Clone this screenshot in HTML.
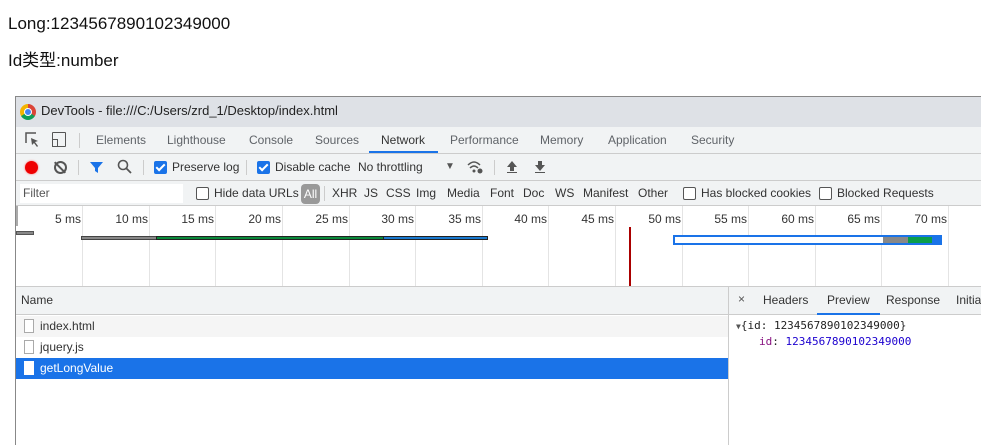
<!DOCTYPE html>
<html><head><meta charset="utf-8"><style>
*{margin:0;padding:0;box-sizing:border-box}
body{width:981px;height:445px;overflow:hidden;background:#fff;font-family:"Liberation Sans","Noto Sans CJK SC",sans-serif;position:relative;color:#222}
.a{position:absolute;white-space:nowrap;line-height:1.15}
.t{font-size:12px;color:#333}
.g{color:#5f6368}
.cb{position:absolute;width:13px;height:13px;border-radius:2px}
.on{background:#1a73e8}
.on:after{content:"";position:absolute;left:4px;top:1px;width:3px;height:7px;border:solid #fff;border-width:0 2px 2px 0;transform:rotate(45deg)}
.off{border:1px solid #555;background:#fff}
.vl{position:absolute;width:1px;background:#ccc}
.grid{position:absolute;top:206px;height:80px;width:1px;background:#e4e4e4}
.ms{position:absolute;top:212px;font-size:12px;color:#333;text-align:right;width:50px}
</style></head><body>
<div class="a" style="left:8px;top:15px;font-size:17px;color:#111;line-height:18px">Long:1234567890102349000</div>
<div class="a" style="left:8px;top:52px;font-size:17px;color:#111;line-height:18px">Id类型:number</div>

<div class="a" style="left:15px;top:96px;width:966px;height:349px;border-left:1px solid #888;border-top:1px solid #888;background:#fff"></div>
<div class="a" style="left:16px;top:97px;width:965px;height:30px;background:#dee1e6"></div>
<div class="a" style="left:20px;top:104px;width:16px;height:16px;border-radius:50%;background:conic-gradient(#db4437 0 120deg,#0f9d58 120deg 240deg,#f4b400 240deg)"></div>
<div class="a" style="left:24px;top:108px;width:8px;height:8px;border-radius:50%;background:#4285f4;border:1px solid #fff"></div>
<div class="a" style="left:41px;top:104px;font-size:13px;color:#222">DevTools - file:///C:/Users/zrd_1/Desktop/index.html</div>
<div class="a" style="left:16px;top:127px;width:965px;height:27px;background:#f1f3f4;border-bottom:1px solid #ccc"></div>
<svg class="a" style="left:25px;top:132px" width="16" height="16"><path d="M1 11V1H11" fill="none" stroke="#555" stroke-width="1.5"/><path d="M6 6L13 9L10 10L13 14L12 15L9 11L7 13Z" fill="#555"/></svg>
<div class="a" style="left:52px;top:132px;width:14px;height:15px;border:1.5px solid #555;border-radius:1px"></div>
<div class="a" style="left:52px;top:139px;width:6px;height:8px;border:1.5px solid #555;background:#f1f3f4"></div>
<div class="vl" style="left:79px;top:133px;height:15px"></div>
<div class="a g" style="left:96px;top:134px;font-size:12px">Elements</div>
<div class="a g" style="left:167px;top:134px;font-size:12px">Lighthouse</div>
<div class="a g" style="left:249px;top:134px;font-size:12px">Console</div>
<div class="a g" style="left:315px;top:134px;font-size:12px">Sources</div>
<div class="a" style="left:381px;top:134px;font-size:12px;color:#333">Network</div>
<div class="a" style="left:369px;top:151px;width:69px;height:2px;background:#1a73e8"></div>
<div class="a g" style="left:450px;top:134px;font-size:12px">Performance</div>
<div class="a g" style="left:540px;top:134px;font-size:12px">Memory</div>
<div class="a g" style="left:608px;top:134px;font-size:12px">Application</div>
<div class="a g" style="left:691px;top:134px;font-size:12px">Security</div>
<div class="a" style="left:16px;top:154px;width:965px;height:27px;background:#f1f3f4;border-bottom:1px solid #ccc"></div>
<div class="a" style="left:25px;top:161px;width:13px;height:13px;border-radius:50%;background:#e00;box-shadow:0 0 2px #f66"></div>
<div class="a" style="left:54px;top:161px;width:13px;height:13px;border-radius:50%;border:2px solid #555"></div>
<div class="a" style="left:59px;top:160px;width:2px;height:15px;background:#555;transform:rotate(-45deg)"></div>
<div class="vl" style="left:78px;top:160px;height:15px"></div>
<svg class="a" style="left:89px;top:160px" width="15" height="15"><path d="M1 2H14L9 8V13L6 11V8Z" fill="#1a73e8"/></svg>
<svg class="a" style="left:117px;top:159px" width="15" height="15"><circle cx="6" cy="6" r="4.5" fill="none" stroke="#555" stroke-width="1.6"/><path d="M9 9L14 14" stroke="#555" stroke-width="1.8"/></svg>
<div class="vl" style="left:143px;top:160px;height:15px"></div>
<div class="cb on" style="left:154px;top:161px"></div>
<div class="a t" style="left:172px;top:161px">Preserve log</div>
<div class="vl" style="left:246px;top:160px;height:15px"></div>
<div class="cb on" style="left:257px;top:161px"></div>
<div class="a t" style="left:275px;top:161px">Disable cache</div>
<div class="a t" style="left:358px;top:161px">No throttling</div>
<div class="a" style="left:445px;top:161px;font-size:10px;color:#555">▼</div>
<svg class="a" style="left:466px;top:159px" width="18" height="16"><path d="M2 6Q8 0 14 6M4 9Q8 5 12 9" fill="none" stroke="#555" stroke-width="1.5"/><circle cx="8" cy="12" r="1.5" fill="#555"/><circle cx="14" cy="12" r="2.5" fill="#555"/></svg>
<div class="vl" style="left:494px;top:160px;height:15px"></div>
<svg class="a" style="left:505px;top:160px" width="14" height="14"><path d="M7 1L12 7H9V11H5V7H2Z M2 12H12V13H2Z" fill="#555"/></svg>
<svg class="a" style="left:533px;top:160px" width="14" height="14"><path d="M5 1H9V5H12L7 11L2 5H5Z M2 12H12V13H2Z" fill="#555"/></svg>
<div class="a" style="left:16px;top:181px;width:965px;height:25px;background:#f1f3f4;border-bottom:1px solid #ccc"></div>
<div class="a" style="left:20px;top:184px;width:163px;height:19px;background:#fff"></div>
<div class="a t" style="left:23px;top:187px;color:#555">Filter</div>
<div class="cb off" style="left:196px;top:187px"></div>
<div class="a t" style="left:214px;top:187px">Hide data URLs</div>
<div class="a" style="left:301px;top:184px;width:19px;height:20px;border-radius:4px;background:#999;color:#fff;font-size:12px;text-align:center;line-height:20px">All</div>
<div class="vl" style="left:324px;top:186px;height:15px"></div>
<div class="a t" style="left:332px;top:187px">XHR</div>
<div class="a t" style="left:364px;top:187px">JS</div>
<div class="a t" style="left:386px;top:187px">CSS</div>
<div class="a t" style="left:416px;top:187px">Img</div>
<div class="a t" style="left:447px;top:187px">Media</div>
<div class="a t" style="left:490px;top:187px">Font</div>
<div class="a t" style="left:523px;top:187px">Doc</div>
<div class="a t" style="left:555px;top:187px">WS</div>
<div class="a t" style="left:583px;top:187px">Manifest</div>
<div class="a t" style="left:638px;top:187px">Other</div>
<div class="cb off" style="left:683px;top:187px"></div>
<div class="a t" style="left:701px;top:187px">Has blocked cookies</div>
<div class="cb off" style="left:819px;top:187px"></div>
<div class="a t" style="left:837px;top:187px">Blocked Requests</div>
<div class="grid" style="left:82px"></div><div class="ms" style="left:31px">5 ms</div>
<div class="grid" style="left:149px"></div><div class="ms" style="left:98px">10 ms</div>
<div class="grid" style="left:215px"></div><div class="ms" style="left:164px">15 ms</div>
<div class="grid" style="left:282px"></div><div class="ms" style="left:231px">20 ms</div>
<div class="grid" style="left:349px"></div><div class="ms" style="left:298px">25 ms</div>
<div class="grid" style="left:415px"></div><div class="ms" style="left:364px">30 ms</div>
<div class="grid" style="left:482px"></div><div class="ms" style="left:431px">35 ms</div>
<div class="grid" style="left:548px"></div><div class="ms" style="left:497px">40 ms</div>
<div class="grid" style="left:615px"></div><div class="ms" style="left:564px">45 ms</div>
<div class="grid" style="left:682px"></div><div class="ms" style="left:631px">50 ms</div>
<div class="grid" style="left:748px"></div><div class="ms" style="left:697px">55 ms</div>
<div class="grid" style="left:815px"></div><div class="ms" style="left:764px">60 ms</div>
<div class="grid" style="left:881px"></div><div class="ms" style="left:830px">65 ms</div>
<div class="grid" style="left:948px"></div><div class="ms" style="left:897px">70 ms</div>
<div class="a" style="left:16px;top:206px;width:2px;height:20px;background:#aaa"></div>
<div class="a" style="left:16px;top:231px;width:18px;height:4px;background:#888;border:1px solid #555"></div>
<div class="a" style="left:81px;top:236px;width:76px;height:4px;background:#888;border:1px solid #444"></div>
<div class="a" style="left:156px;top:236px;width:228px;height:4px;background:#0a8a3a;border:1px solid #222"></div>
<div class="a" style="left:383px;top:236px;width:105px;height:4px;background:#1a7ad0;border:1px solid #222"></div>
<div class="a" style="left:629px;top:227px;width:2px;height:59px;background:#a00"></div>
<div class="a" style="left:673px;top:235px;width:269px;height:10px;background:#1a73e8"></div>
<div class="a" style="left:675px;top:237px;width:208px;height:6px;background:#fff"></div>
<div class="a" style="left:883px;top:237px;width:25px;height:6px;background:#888"></div>
<div class="a" style="left:908px;top:237px;width:24px;height:6px;background:#0a9d4a"></div>
<div class="a" style="left:16px;top:286px;width:965px;height:1px;background:#ccc"></div>
<div class="a" style="left:16px;top:287px;width:712px;height:28px;background:#f1f3f4;border-bottom:1px solid #ccc"></div>
<div class="a t" style="left:21px;top:294px">Name</div>
<div class="a" style="left:728px;top:287px;width:1px;height:158px;background:#ccc"></div>
<div class="a" style="left:729px;top:287px;width:252px;height:28px;background:#f1f3f4;border-bottom:1px solid #ccc"></div>
<div class="a t" style="left:738px;top:293px;color:#555">×</div>
<div class="a t" style="left:763px;top:294px">Headers</div>
<div class="a t" style="left:827px;top:294px">Preview</div>
<div class="a" style="left:817px;top:313px;width:63px;height:2px;background:#1a73e8"></div>
<div class="a t" style="left:886px;top:294px">Response</div>
<div class="a t" style="left:956px;top:294px">Initiator</div>
<div class="a" style="left:16px;top:316px;width:712px;height:21px;background:#f5f5f5"></div>
<div class="a" style="left:16px;top:358px;width:712px;height:21px;background:#1a73e8"></div>
<div class="a" style="left:24px;top:319px;width:10px;height:14px;border:1px solid #aaa;background:#fff"></div>
<div class="a t" style="left:40px;top:320px">index.html</div>
<div class="a" style="left:24px;top:340px;width:10px;height:14px;border:1px solid #aaa;background:#fff"></div>
<div class="a t" style="left:40px;top:341px">jquery.js</div>
<div class="a" style="left:24px;top:361px;width:10px;height:14px;background:#fff"></div>
<div class="a t" style="left:40px;top:362px;color:#fff">getLongValue</div>
<div class="a" style="left:736px;top:320px;font-size:11px;font-family:'DejaVu Sans Mono',monospace;color:#222"><span style="font-size:8px;color:#555">▼</span>{id: 1234567890102349000}</div>
<div class="a" style="left:759px;top:336px;font-size:11px;font-family:'DejaVu Sans Mono',monospace"><span style="color:#881280">id</span>: <span style="color:#1c00cf">1234567890102349000</span></div>
</body></html>
